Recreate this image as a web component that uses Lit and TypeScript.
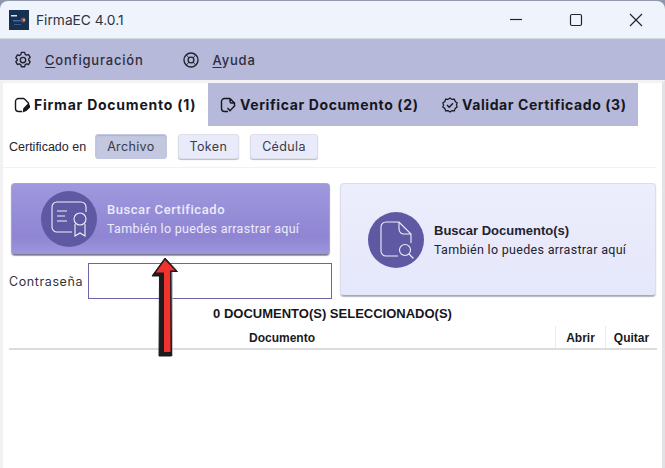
import { LitElement, html, css, svg } from "lit";
import { customElement } from "lit/decorators.js";

const gear = svg`<path d="M8.2 1.5h3.6l.6 2.2 1.6.9 2.2-.6 1.8 3.1-1.6 1.6v1.6l1.6 1.6-1.8 3.1-2.2-.6-1.6.9-.6 2.2H8.2l-.6-2.2-1.6-.9-2.2.6-1.8-3.1 1.6-1.6V9.1L2 7.5l1.8-3.1 2.2.6 1.6-.9z" stroke-linejoin="round"/><circle cx="10" cy="10" r="3"/>`;

@customElement("app-root")
export class AppRoot extends LitElement {
  static styles = css`
    :host { display: block; width: 665px; height: 468px; position: relative; overflow: hidden; background: #fff; font-family: "Inter", "Liberation Sans", sans-serif; color: #2b2b33; }
    .window { height: 468px; display: flex; flex-direction: column; background: #8f96ad; }
    .title { height: 38px; margin-top: 1px; flex: none; display: flex; align-items: center; padding-left: 9px; background: #eff3fb; border-radius: 8px 8px 0 0; border-bottom: 1px solid #d4d7e6; box-sizing: border-box; }
    .logo { width: 20px; height: 20px; display: block; margin-right: 7px; }
    .title-text { font-size: 13.75px; color: #30343c; font-family: "Inter", sans-serif; }
    .win-btns { margin-left: auto; margin-right: -1px; display: flex; }
    .win-btn { width: 60px; height: 38px; display: flex; align-items: center; justify-content: center; }
    .win-btn svg { width: 14px; height: 14px; fill: none; stroke: #22252b; stroke-width: 1.2; }
    .menu { height: 41px; flex: none; background: #b6b9da; display: flex; align-items: center; padding-left: 14px; }
    .menu-item { display: flex; align-items: center; font-size: 13px; font-weight: 500; letter-spacing: .8px; color: #2e2e3c; }
    .menu-item svg { width: 18px; height: 18px; fill: none; stroke: #20212c; stroke-width: 1.5; margin-right: 13px; }
    .menu-item + .menu-item { margin-left: 38px; }
    .menu-item u { text-underline-offset: 2px; }
    .main { flex: 1; background: #fff; border-left: 3px solid #f1f1f3; border-right: 3px solid #e2e2e6; border-top: 3px solid #f3f3f6; display: flex; flex-direction: column; min-height: 0; }
    .tabs { height: 43px; flex: none; display: flex; }
    .tab { height: 43px; display: flex; align-items: center; box-sizing: border-box; font-weight: 700; font-size: 14px; color: #17171f; white-space: nowrap; background: #b6b9da; }
    .tab svg { width: 16px; height: 16px; fill: none; stroke: #17171f; stroke-width: 1.4; margin-right: 4px; flex: none; }
    .tab.active { background: #fff; width: 205px; padding-left: 11px; letter-spacing: .77px; }
    .tab.t2 { width: 217px; padding-left: 12px; letter-spacing: .62px; }
    .tab.t3 { width: 213px; padding-left: 17px; letter-spacing: .58px; }
    .cert { height: 42px; flex: none; display: flex; align-items: center; padding-left: 6px; border-bottom: 1px solid #f1f1f4; margin-right: 6px; box-sizing: border-box; font-size: 12px; }
    .cert-label { font-family: "Liberation Sans", sans-serif; font-size: 12.5px; color: #24242c; margin-right: 9px; }
    .seg { height: 25px; box-sizing: border-box; padding: 0 11px; display: flex; align-items: center; border-radius: 3px; font-size: 12.5px; letter-spacing: .35px; color: #3a3a48; background: #e9ebfb; border: 1px solid #dddfe8; box-shadow: 0 1px 1px #b9bac4; margin-right: 11px; }
    .seg.on { background: #c3c7e0; border-color: #c3c7e0; box-shadow: inset 0 1px 1px #aeb2cc; }
    .upload { flex: none; display: grid; grid-template-columns: 321px 316px; column-gap: 8px; padding: 15px 0 0 8px; }
    .left { display: flex; flex-direction: column; }
    .card { box-sizing: border-box; border-radius: 4px; display: flex; align-items: center; font-family: "Roboto", sans-serif; }
    .card.c1 { width: 319px; height: 72px; padding-left: 29px; background: linear-gradient(#9f98dd, #8f85d3 75%, #9d96dc); border: 1px solid #a7a3cf; border-bottom: 1.5px solid #7c7a90; box-shadow: 0 1px 1px #9c9cab; color: #ecebfb; }
    .card.c2 { height: 113px; padding-left: 27px; background: linear-gradient(#eceefc, #e5e7fb); border: 1px solid #dcdde8; border-bottom: 1.5px solid #a8a9b2; box-shadow: 0 1px 1px #b5b6bf; color: #23232e; }
    .disc { width: 56px; height: 56px; border-radius: 50%; background: #5f59a4; flex: none; display: flex; align-items: center; justify-content: center; margin-right: 10px; }
    .disc svg { width: 40px; height: 40px; fill: none; stroke: #f1f0fa; stroke-width: 1.1; }
    .card-title { font-size: 13px; font-weight: 500; letter-spacing: .55px; line-height: 19px; }
    .card-sub { font-size: 12.5px; letter-spacing: .3px; line-height: 19px; }
    .c2 .card-title { font-family: "Liberation Sans", sans-serif; font-weight: 700; font-size: 13px; letter-spacing: 0; }
    .pass { display: flex; align-items: center; margin-top: 8px; height: 36px; }
    .pass label { font-size: 12.5px; letter-spacing: .6px; color: #33333c; width: 79px; margin-left: -2px; }
    .pass input { width: 244px; height: 36px; box-sizing: border-box; border: 1px solid #6e62a8; background: #fff; padding: 0; outline: none; }
    .count { text-align: center; font-family: "Liberation Sans", sans-serif; font-weight: 700; font-size: 13px; color: #16161c; margin-top: 7px; line-height: 16px; height: 16px; }
    .thead { margin: 4px 5px 0 6px; height: 24px; display: grid; grid-template-columns: 546px 50px 52px; border-bottom: 2px solid #dcdcdf; box-sizing: border-box; font-family: "Liberation Sans", sans-serif; font-weight: 700; font-size: 12px; color: #1a1a24; }
    .th { display: flex; align-items: center; justify-content: center; padding-top: 1px; box-sizing: border-box; }
    .th + .th { border-left: 1px solid #ececef; }
    .arrow { position: absolute; left: 148px; top: 254px; width: 34px; height: 104px; }
  `;

  render() {
    return html`
      <div class="window">
        <div class="title">
          <svg class="logo" viewBox="0 0 20 20">
            <rect width="20" height="20" fill="#16304f"/>
            <rect x="2" y="5" width="6" height="1.5" fill="#dbe3ee"/>
            <rect x="4" y="10" width="7" height="1.5" fill="#3c6ea8"/>
            <circle cx="14" cy="10" r="2.6" fill="#6a4a70"/>
            <circle cx="15" cy="10" r="1.2" fill="#e8a83a"/>
            <rect x="5" y="14" width="7" height="1" fill="#3c5a86"/>
          </svg>
          <span class="title-text">FirmaEC 4.0.1</span>
          <div class="win-btns">
            <div class="win-btn"><svg viewBox="0 0 14 14"><path d="M1 6.5h12"/></svg></div>
            <div class="win-btn"><svg viewBox="0 0 14 14"><rect x="1.5" y="1.5" width="11" height="11" rx="1.5"/></svg></div>
            <div class="win-btn"><svg viewBox="0 0 14 14"><path d="M1 1l12 12M13 1L1 13"/></svg></div>
          </div>
        </div>
        <div class="menu">
          <div class="menu-item"><svg viewBox="0 0 20 20">${gear}</svg><span><u>C</u>onfiguración</span></div>
          <div class="menu-item"><svg viewBox="0 0 20 20"><circle cx="10" cy="10" r="7.8"/><circle cx="10" cy="10" r="3.2"/><path d="M5 4.5l2.6 3M15 4.5l-2.6 3M5 15.5l2.6-3M15 15.5l-2.6-3" stroke-width="1"/></svg><span><u>A</u>yuda</span></div>
        </div>
        <div class="main">
          <div class="tabs">
            <div class="tab active"><svg viewBox="0 0 16 16"><path d="M10 1.5H4.5a3 3 0 0 0-3 3v7a3 3 0 0 0 3 3H8"/><path d="M10 1.5l4.5 4.5V8"/><path d="M9.5 14.5l.5-3 4-4 2 2-4 4z" fill="#17171f"/></svg>Firmar Documento (1)</div>
            <div class="tab t2"><svg viewBox="0 0 16 16"><path d="M10 1.5H4.5a3 3 0 0 0-3 3v7a3 3 0 0 0 3 3H8"/><path d="M10 1.5v3a1.5 1.5 0 0 0 1.5 1.5h3V9M10 1.5l4.5 4.5"/><path d="M7.5 11l2.5 2.8 5-5.3"/></svg>Verificar Documento (2)</div>
            <div class="tab t3"><svg viewBox="0 0 16 16"><path d="M8 1l2 1.4 2.4-.2.8 2.3 2 1.4-.8 2.1.8 2.1-2 1.4-.8 2.3-2.4-.2L8 15l-2-1.4-2.4.2-.8-2.3-2-1.4.8-2.1-.8-2.1 2-1.4.8-2.3 2.4.2z" stroke-width="1.2"/><path d="M5 8l2.2 2.2L11 6.2"/></svg>Validar Certificado (3)</div>
          </div>
          <div class="cert">
            <span class="cert-label">Certificado en</span>
            <div class="seg on">Archivo</div>
            <div class="seg">Token</div>
            <div class="seg">Cédula</div>
          </div>
          <div class="upload">
            <div class="left">
              <div class="card c1">
                <div class="disc"><svg viewBox="0 0 40 40"><path d="M23 33H8a5 5 0 0 1-5-5V8a5 5 0 0 1 5-5h24a5 5 0 0 1 5 5v5"/><path d="M8 12h10M8 17h8M8 22h10"/><circle cx="31" cy="20" r="6"/><path d="M26 25v12l5-3 5 3V25"/></svg></div>
                <div><div class="card-title">Buscar Certificado</div><div class="card-sub">También lo puedes arrastrar aquí</div></div>
              </div>
              <div class="pass"><label>Contraseña</label><input type="password" /></div>
            </div>
            <div class="card c2">
              <div class="disc"><svg viewBox="0 0 40 40"><path d="M22 36H10a5 5 0 0 1-5-5V7a5 5 0 0 1 5-5h13l12 12v9"/><path d="M23 2v7a5 5 0 0 0 5 5h7"/><circle cx="29" cy="30" r="5.5"/><path d="M33 34l4.5 4.5"/></svg></div>
              <div><div class="card-title">Buscar Documento(s)</div><div class="card-sub">También lo puedes arrastrar aquí</div></div>
            </div>
          </div>
          <div class="count">0 DOCUMENTO(S) SELECCIONADO(S)</div>
          <div class="thead"><div class="th">Documento</div><div class="th">Abrir</div><div class="th">Quitar</div></div>
        </div>
      </div>
      <svg class="arrow" viewBox="0 0 34 104">
        <path d="M24 18V102" stroke="#b0b0b4" stroke-width="1.5" fill="none"/>
        <path d="M17 4L29.5 17.5H23L23.5 102H11L11.5 22L4 22Z" fill="#1f1b1d" stroke="#1f1b1d" stroke-width="1" stroke-linejoin="round"/>
        <path d="M17 6L27 16.5H22L22.5 98H16L16 18.5H8Z" fill="#f0332f"/>
      </svg>
    `;
  }
}
